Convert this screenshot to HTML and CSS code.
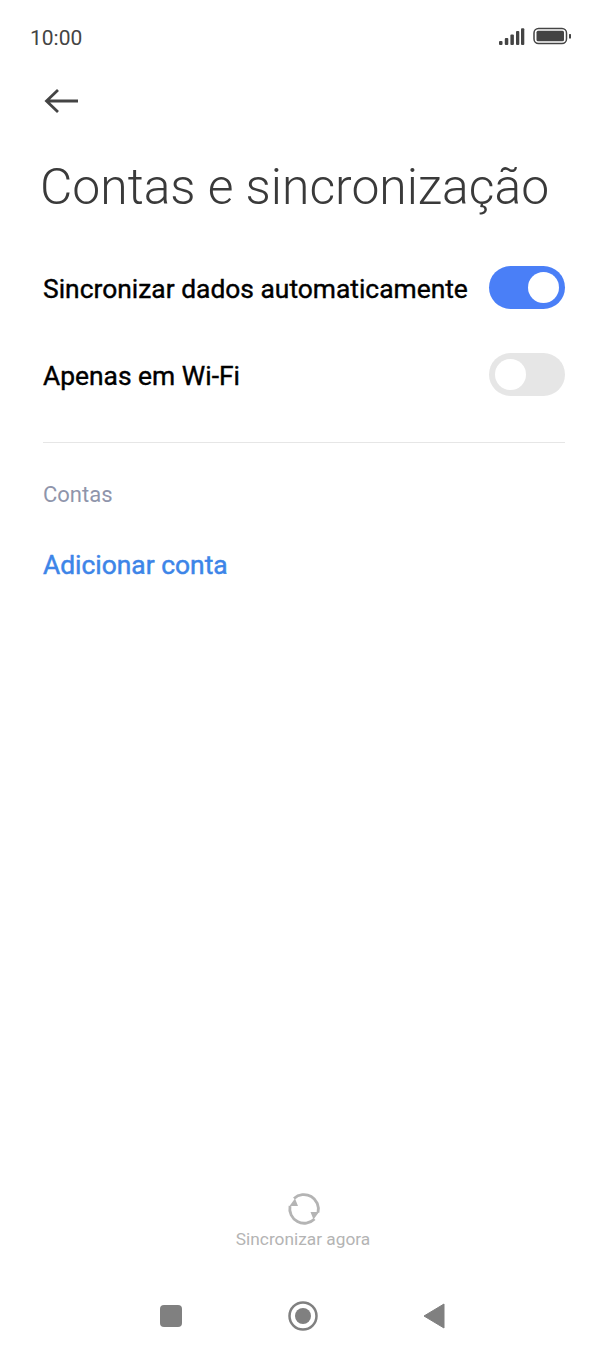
FILE: index.html
```html
<!DOCTYPE html>
<html>
<head>
    <meta charset="UTF-8">
    <title>Contas e sincronização</title>
    <link rel="stylesheet" href="styles.css">
</head>
<body>
    <div class="screen">
        <div class="status">
            <span class="time">10:00</span>
            <svg class="status-icons" width="72" height="20" viewBox="0 0 72 20">
                <g fill="#444">
                    <rect x="0" y="14" width="3.500" height="4" rx="1"/>
                    <rect x="5.800" y="11" width="3.500" height="7" rx="1"/>
                    <rect x="11.400" y="7.500" width="3.500" height="10.500" rx="1"/>
                    <rect x="17" y="4" width="3.300" height="14" rx="1"/>
                    <rect x="22" y="1.300" width="3.300" height="16.700" rx="1"/>
                    <rect x="37.500" y="3.700" width="27.500" height="10.500" rx="1.500"/>
                    <rect x="70" y="7" width="2" height="4.500" rx="0.500"/>
                </g>
                <rect x="35" y="1.500" width="32.500" height="15" rx="4.500" fill="none" stroke="#444" stroke-width="1.500"/>
            </svg>
        </div>

        <div class="back">
            <svg width="36" height="26" viewBox="0 0 36 26">
                <path d="M34 13H3M14 2 2.500 13 14 24" fill="none" stroke="#444" stroke-width="2.800"/>
            </svg>
        </div>

        <h1 class="title">Contas e sincronização</h1>

        <div class="row">
            <span class="label">Sincronizar dados automaticamente</span>
            <span class="toggle on"><span class="knob"></span></span>
        </div>
        <div class="row">
            <span class="label">Apenas em Wi-Fi</span>
            <span class="toggle"><span class="knob"></span></span>
        </div>

        <div class="divider"></div>

        <div class="section">Contas</div>
        <div class="add">Adicionar conta</div>

        <div class="sync">
            <svg width="34" height="34" viewBox="0 0 34 34">
                <path d="M7 6.500A14.500 14.500 0 0 1 31 20.500M27.500 27A14.500 14.500 0 0 1 3 14" fill="none" stroke="#b4b4b4" stroke-width="2.800"/>
                <path d="M23.500 20H32L26.500 27.500ZM11 14H2.500L8 6.500Z" fill="#b4b4b4"/>
            </svg>
            <span class="sync-text">Sincronizar agora</span>
        </div>

        <div class="nav">
            <svg width="22" height="22" viewBox="0 0 22 22"><rect width="22" height="22" rx="4" fill="#808080"/></svg>
            <svg width="30" height="30" viewBox="0 0 30 30">
                <circle cx="15" cy="15" r="13.500" fill="none" stroke="#808080" stroke-width="2.500"/>
                <circle cx="15" cy="15" r="8" fill="#808080"/>
            </svg>
            <svg width="22" height="26" viewBox="0 0 22 26"><path d="M21 1V25L1 13Z" fill="#808080" stroke="#808080" stroke-linejoin="round"/></svg>
        </div>
    </div>
</body>
</html>
```

FILE: styles.css
```css
* {
    box-sizing: border-box;
}

body {
    margin: 0;
    background: #fff;
    font-family: Roboto, sans-serif;
}

.screen {
    height: 1352px;
    display: flex;
    flex-direction: column;
    padding: 0 43px;
}

.status {
    display: flex;
    justify-content: space-between;
    align-items: center;
    height: 26px;
    margin: 24px -6px 0 -13px;
}

.time {
    margin-top: 2px;
    font-size: 21px;
    line-height: 28px;
    color: #444;
}

.back {
    height: 26px;
    margin: 38px 0 0 1px;
}

.title {
    margin: 43px 0 0 -3px;
    font-size: 49.800px;
    line-height: 60px;
    font-weight: 300;
    color: #3a3a3a;
    white-space: nowrap;
}

.row {
    display: flex;
    justify-content: space-between;
    align-items: center;
    height: 43px;
}

.title + .row {
    margin-top: 49px;
}

.row + .row {
    margin-top: 44px;
}

.label {
    margin-top: 2px;
    font-size: 26.400px;
    line-height: 44px;
    -webkit-text-stroke: 0.4px #000;
    color: #000;
    white-space: nowrap;
}

.toggle {
    display: flex;
    align-items: center;
    width: 76px;
    height: 43px;
    padding: 0 6px;
    border-radius: 22px;
    background: #e6e6e6;
}

.toggle.on {
    justify-content: flex-end;
    background: #4a7ff7;
}

.knob {
    width: 31px;
    height: 31px;
    border-radius: 50%;
    background: #fff;
}

.divider {
    height: 1px;
    margin-top: 46px;
    background: #e6e6e6;
}

.section {
    margin-top: 40px;
    font-size: 22px;
    line-height: 24px;
    color: #8f95ab;
}

.add {
    margin-top: 43px;
    font-size: 26.400px;
    line-height: 30px;
    -webkit-text-stroke: 0.5px #3d85e8;
    color: #3d85e8;
}

.sync {
    display: flex;
    flex-direction: column;
    align-items: center;
    margin-top: auto;
}

.sync-text {
    margin-top: 3px;
    padding-right: 2px;
    font-size: 17.300px;
    line-height: 20px;
    color: #b4b4b4;
}

.nav {
    display: flex;
    justify-content: space-between;
    align-items: center;
    height: 30px;
    margin: 52px 0 21px;
    padding: 0 120px 0 117px;
}
```
